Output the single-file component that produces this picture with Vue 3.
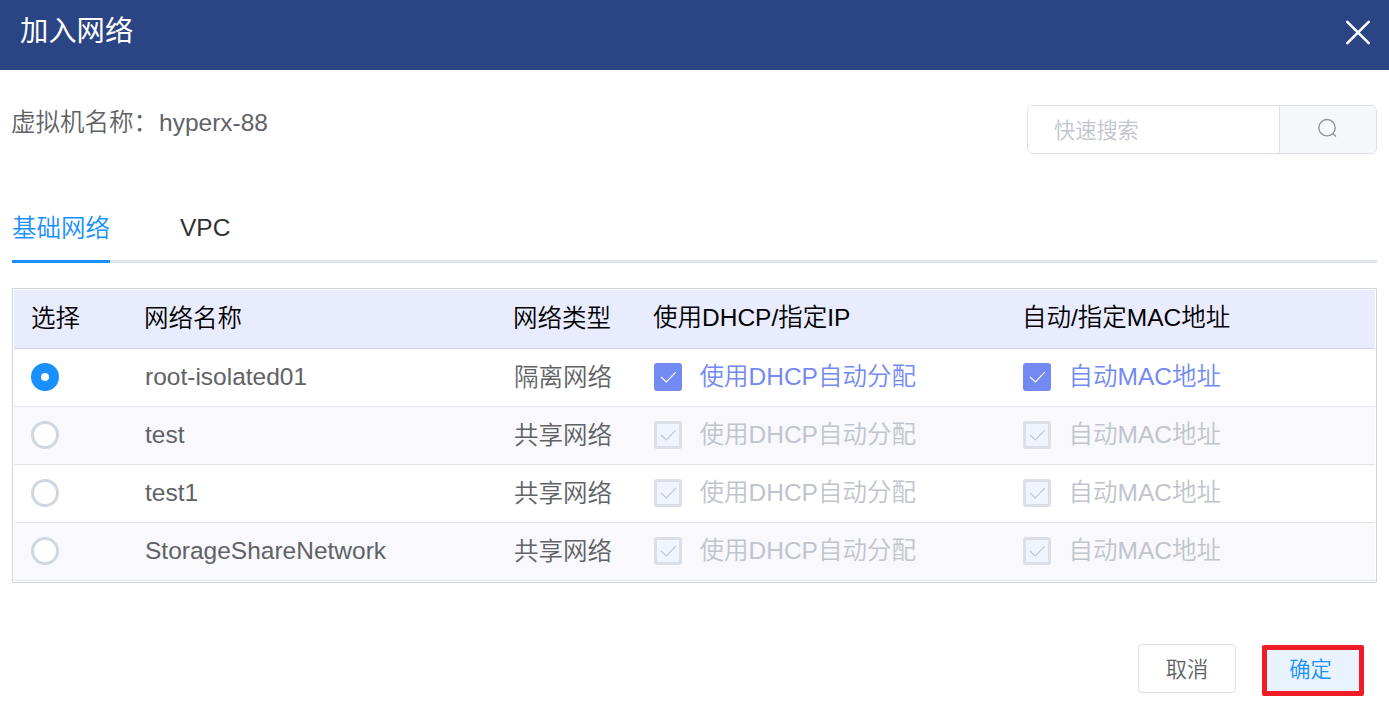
<script setup>
import { ref } from 'vue'

const selected = ref(0)
const keyword = ref('')
const networks = [
  { name: 'root-isolated01', type: '隔离网络' },
  { name: 'test', type: '共享网络' },
  { name: 'test1', type: '共享网络' },
  { name: 'StorageShareNetwork', type: '共享网络' },
]
</script>

<template>
  <div class="dialog">
    <header class="titlebar">
      <h1>加入网络</h1>
      <svg class="close" viewBox="0 0 26 26"><path d="M2.3 2.8L23.7 24.2M23.7 2.8L2.3 24.2" /></svg>
    </header>

    <section class="top">
      <div class="vm">虚拟机名称：<span>hyperx-88</span></div>
      <div class="search">
        <input v-model="keyword" placeholder="快速搜索" />
        <button class="search-btn">
          <svg viewBox="0 0 20 20"><circle cx="9" cy="9.7" r="8.2" /><path d="M14.7 15.4L18 18.5" /></svg>
        </button>
      </div>
    </section>

    <nav class="tabs">
      <span class="tab active">基础网络</span>
      <span class="tab">VPC</span>
    </nav>

    <div class="table">
      <div class="row head">
        <span class="pick">选择</span><span class="cjk">网络名称</span><span class="cjk">网络类型</span><span>使用DHCP/指定IP</span><span>自动/指定MAC地址</span>
      </div>
      <div v-for="(n, i) in networks" :key="n.name" class="row body" :class="{ on: selected === i }" @click="selected = i">
        <span class="cell"><i class="radio"></i></span>
        <span class="name">{{ n.name }}</span>
        <span class="cjk">{{ n.type }}</span>
        <span class="cell">
          <i class="check"><svg viewBox="0 0 28 28"><path d="M7 14L12.3 19L21.8 9.2" /></svg></i>
          <span class="label">使用DHCP自动分配</span>
        </span>
        <span class="cell">
          <i class="check"><svg viewBox="0 0 28 28"><path d="M7 14L12.3 19L21.8 9.2" /></svg></i>
          <span class="label">自动MAC地址</span>
        </span>
      </div>
    </div>

    <footer class="actions">
      <button class="cancel">取消</button>
      <button class="confirm">确定</button>
    </footer>
  </div>
</template>

<style>
body { background: #fff; }
</style>

<style scoped>
* { box-sizing: border-box; }
.dialog {
  height: 722px;
  overflow: hidden;
  font: 350 24.5px/36px "Liberation Sans", "Noto Sans CJK SC DemiLight", "Noto Sans CJK SC", sans-serif;
  color: #606266;
  white-space: nowrap;
}
button, input { font-family: inherit; font-weight: inherit; margin: 0; padding: 0; }
.titlebar {
  height: 70px;
  background: #2a4484;
  display: flex;
  justify-content: space-between;
  padding: 10px 18px 0 20px;
}
h1 { margin: 0; font-family: "Liberation Sans", "Noto Sans CJK SC", sans-serif; font-size: 28.3px; font-weight: 400; line-height: 42px; color: #fff; }
.close { width: 26px; height: 26px; margin-top: 9px; fill: none; stroke: #fff; stroke-width: 2.6; stroke-linecap: round; }
.top { display: flex; justify-content: space-between; height: 128px; padding: 35px 12px 0 11px; }
.vm span { margin-left: 1px; }
.search {
  width: 350px; height: 49px;
  border: 1px solid #dcdfe6;
  border-radius: 6px;
  display: flex;
  overflow: hidden;
}
input { flex: 1; min-width: 0; border: 0; outline: 0; padding: 3px 0 0 26px; font-size: 21.2px; color: #606266; background: #fff; }
input::placeholder { color: #c0c4cc; opacity: 1; }
.search-btn { width: 97px; border: 0; border-left: 1px solid #dcdfe6; background: #f5f7fa; display: flex; justify-content: center; padding: 12px 1px 0 0; }
.search-btn svg { width: 20px; height: 20px; fill: none; stroke: #909399; stroke-width: 1.4; }
.tabs { margin: 0 12px; height: 65px; display: flex; gap: 70px; border-bottom: 3px solid #dfe4ed; }
.tab { height: 65px; padding-top: 12px; color: #303133; }
.tab.active { padding-top: 13px; color: #1890ff; border-bottom: 3px solid #1890ff; }
.table { margin: 25px 12px 0; height: 295px; border: 1px solid #d0d4de; padding: 1px; border-radius: 1px; }
.row { display: grid; grid-template-columns: 114px 369px 140px 369px 1fr; height: 58px; padding-left: 17px; align-items: center; border-bottom: 1px solid #dfe6ec; }
.head { height: 59px; padding: 0 0 2px 16px; background: #e9ecff; border-bottom-color: #cfd3df; color: #000; }
.head .pick { padding: 2px 0 0 1px; }
.cjk { padding-top: 2px; }
.body { padding-bottom: 1px; }
.body:nth-child(odd) { background: #f8f8fd; }
.cell { display: flex; align-items: center; }
.radio { width: 28px; height: 28px; border: 3px solid #d1d7e0; border-radius: 50%; background: #fff; }
.on .radio { border: 10px solid #1890ff; }
.check { width: 28px; height: 28px; border: 3px solid #dcdfe6; border-radius: 3px; background: #f0f4ff; margin-right: 17.5px; display: flex; }
.check svg { flex: none; width: 28px; height: 28px; margin: -3px; fill: none; stroke: #c0c4cc; stroke-width: 1.1; }
.label { color: #c0c4cc; }
.on .check { background: #7389f4; border-color: #7389f4; }
.on .check svg { stroke: #fff; }
.on .label { color: #7389f4; }
.actions { display: flex; justify-content: flex-end; padding: 61px 25px 0 0; }
.actions button { font-size: 21.2px; line-height: 30px; }
.cancel { width: 98px; height: 49px; border: 1px solid #dcdfe6; border-radius: 4px; background: #fff; color: #606266; padding-top: 3px; margin-right: 26px; }
.confirm { width: 102px; height: 51px; margin-top: 1px; border: 5px solid #ee1c25; border-radius: 2px; background: #e8f3ff; color: #1890ff; padding: 0 5px 2px 0; }
</style>
